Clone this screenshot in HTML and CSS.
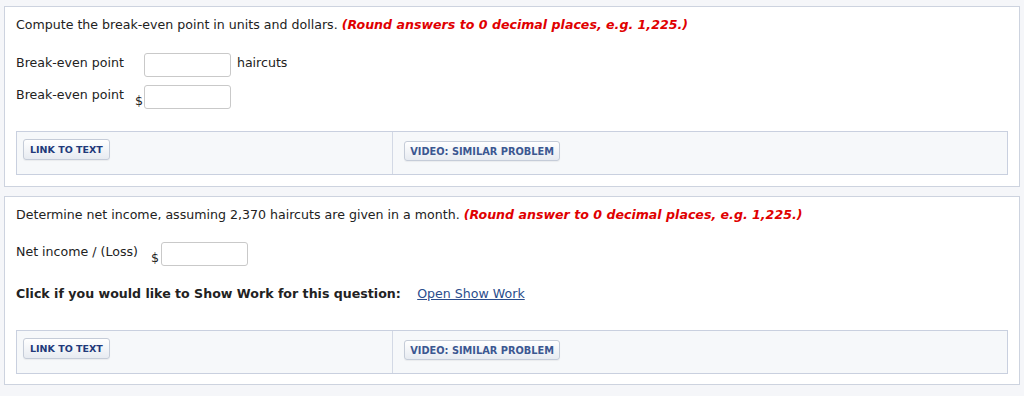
FILE: index.html
```html
<!DOCTYPE html>
<html lang="en">
<head>
    <meta charset="UTF-8">
    <meta name="viewport" content="width=device-width, initial-scale=1.0">
    <title>Break-even Point</title>
    <link rel="stylesheet" href="styles.css">
</head>
<body>
    <div class="part">
        <p class="question">Compute the break-even point in units and dollars. <span class="hint">(Round answers to 0 decimal places, e.g. 1,225.)</span></p>

        <div class="answer-row first">
            <span class="label">Break-even point</span>
            <span class="currency"></span>
            <input type="text" class="answer">
            <span class="unit">haircuts</span>
        </div>
        <div class="answer-row">
            <span class="label">Break-even point</span>
            <span class="currency">$</span>
            <input type="text" class="answer">
        </div>

        <div class="tools">
            <div class="tool-cell left"><button class="tool-btn">Link to Text</button></div>
            <div class="tool-cell right"><button class="tool-btn video">Video: Similar Problem</button></div>
        </div>
    </div>

    <div class="part second">
        <p class="question">Determine net income, assuming 2,370 haircuts are given in a month. <span class="hint">(Round answer to 0 decimal places, e.g. 1,225.)</span></p>

        <div class="answer-row first">
            <span class="label">Net income / (Loss)</span>
            <span class="currency">$</span>
            <input type="text" class="answer">
        </div>

        <p class="show-work">Click if you would like to Show Work for this question: <a href="#">Open Show Work</a></p>

        <div class="tools">
            <div class="tool-cell left"><button class="tool-btn">Link to Text</button></div>
            <div class="tool-cell right"><button class="tool-btn video">Video: Similar Problem</button></div>
        </div>
    </div>
</body>
</html>
```

FILE: styles.css
```css
* {
    margin: 0;
    padding: 0;
    box-sizing: border-box;
}

body {
    background-color: #f5f6f9;
    margin: 6px 4px;
    font-family: 'DejaVu Sans', Verdana, sans-serif;
    font-size: 12.6px;
    line-height: 16px;
    color: #222;
}

.part {
    background-color: #fff;
    border: 1px solid #cdd3df;
    padding: 10px 11px 11px 11px;
    margin-bottom: 9px;
}

.part.second {
    padding-bottom: 10px;
}

.question {
    margin-bottom: 20px;
}

.second .question {
    margin-bottom: 19px;
}

.hint {
    color: #e00000;
    font-weight: bold;
    font-style: italic;
}

.answer-row {
    display: flex;
    align-items: flex-start;
    margin-top: 8px;
}

.answer-row.first {
    margin-top: 0;
}

.label {
    margin-top: 2px;
}

.currency {
    width: 9px;
    margin-left: 11px;
    align-self: flex-end;
    margin-bottom: 0;
    color: #222;
}

.second .currency {
    margin-left: 13px;
    width: 10px;
}

.answer {
    width: 87px;
    height: 24px;
    border: 1px solid #c9c9c9;
    border-radius: 3px;
    background-color: #fff;
}

.unit {
    margin-left: 6px;
    margin-top: 2px;
}

.show-work {
    font-weight: bold;
    margin-top: 20px;
    margin-bottom: 28px;
}

.show-work a {
    font-weight: normal;
    color: #2b4d8c;
    margin-left: 12px;
}

.tools {
    display: grid;
    grid-template-columns: 38% 1fr;
    height: 44px;
    margin-top: 22px;
    background-color: #f6f8fa;
    border: 1px solid #c9d0df;
}

.show-work + .tools {
    margin-top: 0;
}

.tool-cell.left {
    padding: 7px 6px;
    border-right: 1px solid #d3d9e5;
}

.tool-cell.right {
    padding: 9px 11px;
}

.tool-btn {
    font-family: 'DejaVu Sans', Verdana, sans-serif;
    font-size: 9.5px;
    font-weight: bold;
    text-transform: uppercase;
    color: #22397a;
    height: 21px;
    padding: 0 6px;
    border: 1px solid #c5ccd8;
    border-radius: 3px;
    background: linear-gradient(#ffffff, #e7ebf1);
    box-shadow: 0 1px 1px rgba(0, 0, 0, 0.05);
    cursor: pointer;
}

.tool-btn.video {
    font-size: 9.8px;
    color: #3b5791;
    height: 20px;
    padding: 0 5px;
}
```
